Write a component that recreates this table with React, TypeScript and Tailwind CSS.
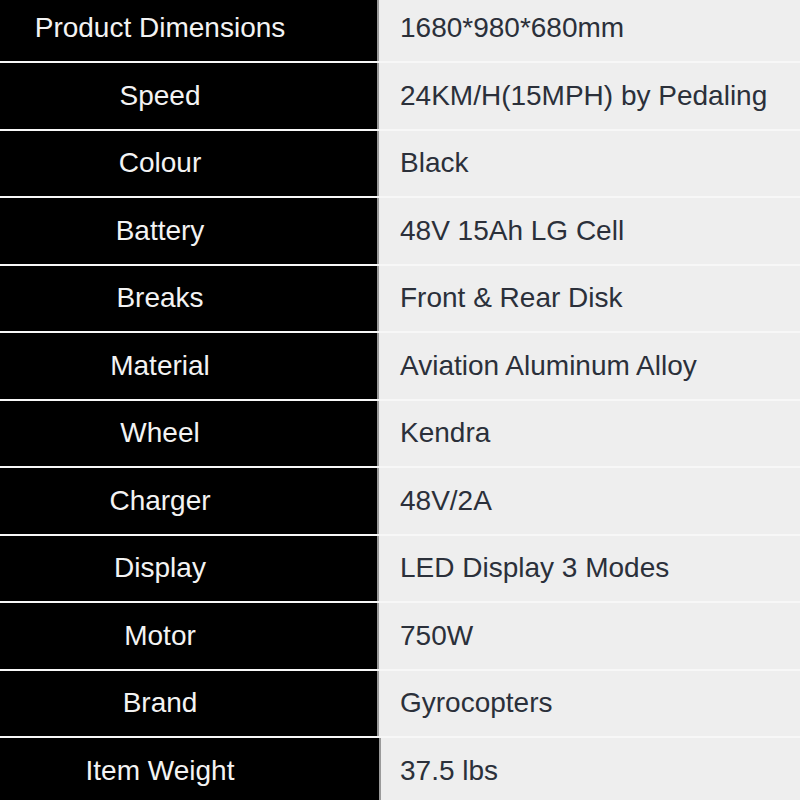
import React from "react";

const rows: [string, string][] = [
  ["Product Dimensions", "1680*980*680mm"],
  ["Speed", "24KM/H(15MPH) by Pedaling"],
  ["Colour", "Black"],
  ["Battery", "48V 15Ah LG Cell"],
  ["Breaks", "Front & Rear Disk"],
  ["Material", "Aviation Aluminum Alloy"],
  ["Wheel", "Kendra"],
  ["Charger", "48V/2A"],
  ["Display", "LED Display 3 Modes"],
  ["Motor", "750W"],
  ["Brand", "Gyrocopters"],
  ["Item Weight", "37.5 lbs"],
];

export default function App() {
  return (
    <div
      className="w-[800px] h-[800px] overflow-hidden bg-white"
      style={{ fontFamily: '"Liberation Sans", Arial, sans-serif' }}
    >
      <div className="mt-[-4.5px] flex flex-col gap-[2px] bg-[#f7f7f7]">
        {rows.map(([k, v], i) => {
          const last = i === rows.length - 1;
          return (
            <div key={k} className="flex h-[65.5px]">
              <div
                className={
                  (last ? "w-[379px] " : "w-[377px] ") +
                  "bg-black flex items-center"
                }
              >
                <div className="w-[320px] text-center text-[28px] text-[#f3f3f3]">
                  {k}
                </div>
              </div>
              <div className="w-[2px] bg-[#9a9a9a]" />
              <div
                className={
                  (last ? "pl-[19px] " : "pl-[21px] ") +
                  "flex-1 bg-[#eeeeee] flex items-center text-[28px] text-[#2b303a]"
                }
              >
                {v}
              </div>
            </div>
          );
        })}
      </div>
    </div>
  );
}
